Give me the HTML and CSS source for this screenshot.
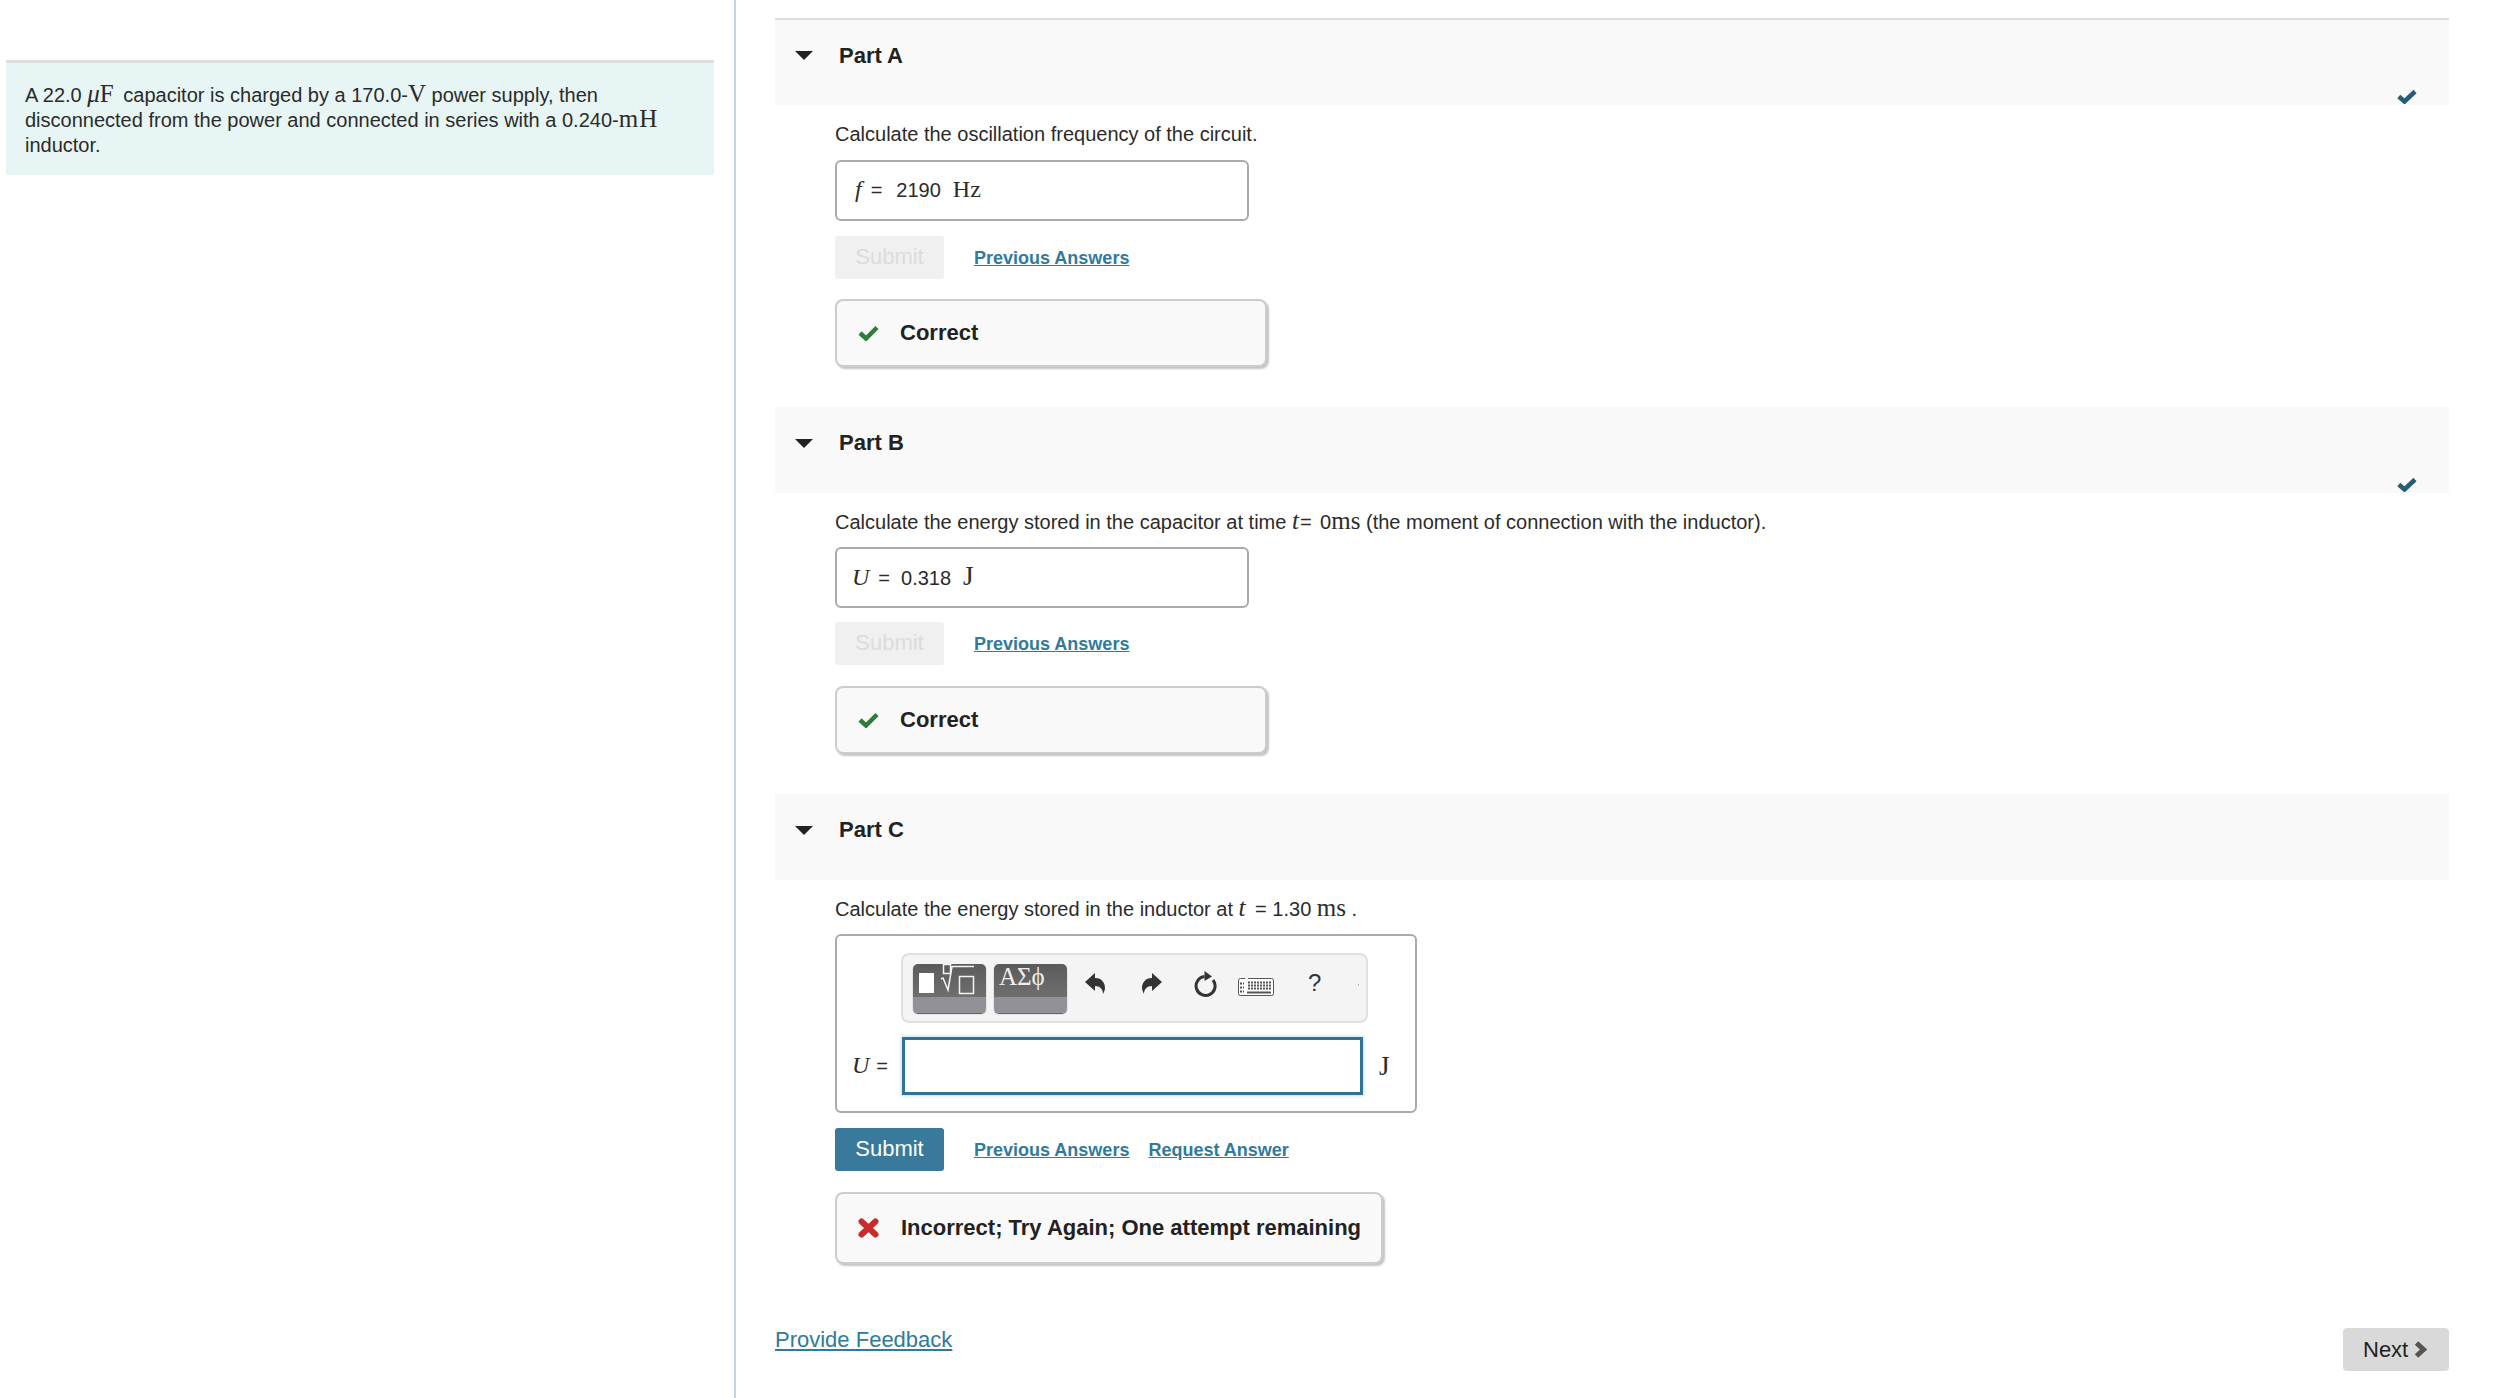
FILE: index.html
```html
<!DOCTYPE html>
<html lang="en">
<head>
<meta charset="utf-8">
<title>Part C</title>
<link rel="stylesheet" href="styles.css">
</head>
<body>
<aside class="aside">
  <div class="intro">
    <span class="line">A 22.0 <span class="mi mu">μ</span><span class="mr mu-f">F</span> capacitor is charged by a 170.0-<span class="mr">V</span> power supply, then</span>
    <span class="line">disconnected from the power and connected in series with a 0.240-<span class="mr mh">mH</span></span>
    <span class="line">inductor.</span>
  </div>
</aside>
<main class="main">
  <section class="part part-first">
    <header class="part-head">
      <span class="caret"></span><h2 class="part-title">Part A</h2>
      <svg class="done" viewBox="0 0 20 15"><polyline points="1.8,7.5 7.5,12.5 18,2.5" /></svg>
    </header>
    <div class="part-body">
      <p class="prompt">Calculate the oscillation frequency of the circuit.</p>
      <div class="answer answer-a"><span class="mi var">f</span><span class="eq">=</span><span class="val">2190</span><span class="mr unit">Hz</span></div>
      <div class="actions actions-a"><span class="btn btn-off">Submit</span><a class="action-link" href="#">Previous Answers</a></div>
      <div class="feedback feedback-ok">
        <svg class="fb-check" viewBox="0 0 21 16"><polyline points="2,8 8,13.5 19,2.5" /></svg>
        <span>Correct</span>
      </div>
    </div>
  </section>
  <section class="part">
    <header class="part-head">
      <span class="caret"></span><h2 class="part-title">Part B</h2>
      <svg class="done" viewBox="0 0 20 15"><polyline points="1.8,7.5 7.5,12.5 18,2.5" /></svg>
    </header>
    <div class="part-body">
      <p class="prompt">Calculate the energy stored in the capacitor at time <span class="mi">t</span><span class="eq-tight">=</span> 0<span class="mr">ms</span> (the moment of connection with the inductor).</p>
      <div class="answer answer-b"><span class="mi var">U</span><span class="eq">=</span><span class="val">0.318</span><span class="mr unit unit-j">J</span></div>
      <div class="actions"><span class="btn btn-off">Submit</span><a class="action-link" href="#">Previous Answers</a></div>
      <div class="feedback feedback-ok">
        <svg class="fb-check" viewBox="0 0 21 16"><polyline points="2,8 8,13.5 19,2.5" /></svg>
        <span>Correct</span>
      </div>
    </div>
  </section>
  <section class="part">
    <header class="part-head">
      <span class="caret"></span><h2 class="part-title">Part C</h2>
    </header>
    <div class="part-body">
      <p class="prompt">Calculate the energy stored in the inductor at <span class="mi t-wide">t</span> = 1.30 <span class="mr">ms</span> .</p>
      <div class="editor">
        <div class="toolbar">
          <span class="tbtn">
            <svg class="tbtn-svg" viewBox="0 0 73 49">
              <rect class="t-solid" x="6" y="9" width="15" height="20"/>
              <rect class="t-line" x="30.5" y="0.5" width="7" height="9"/>
              <polyline class="t-line" points="28,15 30,14 35,26 39,2.5 61,2.5"/>
              <rect class="t-line" x="46.5" y="12.5" width="14" height="17"/>
            </svg>
          </span>
          <span class="tbtn tbtn-text">ΑΣϕ</span>
          <svg class="tool tool-undo" viewBox="0 0 20 49"><path class="t-dark" d="M0 18 L10 9 V14 C17 14 20 19 20 24 C20 26 19 28 18 30 C18 25 15 22 10 22 V27 Z"/></svg>
          <svg class="tool tool-redo" viewBox="0 0 20 49"><path class="t-dark" d="M20 18 L10 9 V14 C3 14 0 19 0 24 C0 26 1 28 2 30 C2 25 5 22 10 22 V27 Z"/></svg>
          <svg class="tool tool-reload" viewBox="0 0 23 49"><path class="t-arc" d="M10.5 12.5 A9.5 9.5 0 1 0 19 16"/><path class="t-dark" d="M10.5 7 L18 12.5 L10.5 17 Z"/></svg>
          <svg class="tool tool-kbd" viewBox="0 0 36 49">
            <rect class="t-kbd" x="0.5" y="14.5" width="35" height="17" rx="2"/>
            <rect class="t-gap" x="7" y="13" width="3" height="6"/>
            <path class="t-dots" d="M10 18.5H33M10 21.5H33M10 24.5H33"/>
            <path class="t-dots" d="M2 19.5H6M2 23.5H6M2 27.5H6"/>
            <path class="t-bar" d="M9 28.5H33"/>
          </svg>
          <span class="tool-help">?</span>
          <span class="tool-dot"></span>
        </div>
        <div class="editor-row">
          <span class="editor-label"><span class="mi var">U</span><span class="eq">=</span></span>
          <div class="editor-input"></div>
          <span class="mr editor-unit">J</span>
        </div>
      </div>
      <div class="actions actions-a"><a class="btn btn-on" href="#">Submit</a><a class="action-link" href="#">Previous Answers</a><a class="action-link link-next" href="#">Request Answer</a></div>
      <div class="feedback feedback-bad">
        <svg class="fb-x" viewBox="0 0 21 20"><path d="M3.5 3.5 L17.5 16.5 M17.5 3.5 L3.5 16.5"/></svg>
        <span>Incorrect; Try Again; One attempt remaining</span>
      </div>
    </div>
  </section>
  <footer class="foot">
    <a class="foot-link" href="#">Provide Feedback</a>
    <a class="next" href="#">Next<svg class="next-icon" viewBox="0 0 13 19"><polyline points="2.5,3 9.5,9.5 2.5,16"/></svg></a>
  </footer>
</main>
</body>
</html>
```
FILE: styles.css
```css
* { box-sizing: border-box; }
html, body { margin: 0; height: 100%; }
body {
  display: flex;
  height: 1398px;
  overflow: hidden;
  background: #fff;
  color: #2b2b2b;
  font-family: "Liberation Sans", Arial, sans-serif;
  font-size: 20px;
}
a { color: #2f7a9f; }
.aside {
  width: 736px;
  flex: none;
  padding: 60px 20px 0 6px;
  border-right: 2px solid #c8d2e2;
}
.intro {
  height: 115px;
  padding: 20px 19px 0;
  background: #e7f5f5;
  border-top: 3px solid #dedddf;
}
.line { display: block; height: 25px; line-height: 25px; white-space: nowrap; }
.mi, .mr { font-family: "Liberation Serif", serif; font-size: 25px; line-height: 20px; }
.mi { font-style: italic; }
.mu-f { margin-right: 3px; letter-spacing: 1px; }
.mh { letter-spacing: 1px; }
.t-wide { margin-right: 4px; }
.main { flex: 1; padding: 18px 69px 0 39px; }
.part { margin-top: 40px; }
.part-first { margin-top: 0; }
.part-first .part-head { height: 87px; border-top: 2px solid #dddddd; }
.part-first .part-head .caret { margin-top: 31px; }
.part-first .part-head .part-title { margin-top: 24px; }
.part-head {
  position: relative;
  display: flex;
  align-items: flex-start;
  height: 86px;
  background: #f9f9f9;
}
.caret {
  width: 0;
  height: 0;
  margin: 32px 26px 0 20px;
  border-left: 9px solid transparent;
  border-right: 9px solid transparent;
  border-top: 9px solid #222;
}
.part-title {
  margin: 24px 0 0;
  font-size: 22px;
  line-height: 24px;
  font-weight: 700;
  color: #222;
}
.done {
  position: absolute;
  right: 32px;
  bottom: 1px;
  width: 20px;
  height: 15px;
  fill: none;
  stroke: #255d75;
  stroke-width: 4.5;
}
.part-body { padding-left: 60px; }
.prompt { margin: 17px 0 0; line-height: 24px; }
.answer {
  display: flex;
  align-items: baseline;
  width: 414px;
  height: 61px;
  margin-top: 13px;
  padding: 17px 0 0 18px;
  border: 2px solid #aaaaaa;
  border-radius: 6px;
}
.answer-a { margin-top: 14px; }
.answer-a .val { margin-left: 14px; }
.answer-b { padding-left: 15px; }
.var { font-size: 24px; }
.eq { margin-left: 9px; font-size: 20px; }
.eq-tight { margin: 0 3px 0 1px; }
.val { margin-left: 11px; }
.unit { margin-left: 12px; font-size: 24px; }
.unit-j { font-size: 27px; }
.actions {
  display: flex;
  align-items: center;
  margin-top: 14px;
}
.actions-a { margin-top: 15px; }
.btn {
  width: 109px;
  height: 43px;
  border-radius: 3px;
  line-height: 41px;
  text-align: center;
  font-size: 22px;
  text-decoration: none;
}
.btn-off { background: #f0f0f0; color: #dcdcdc; }
.btn-on { background: #38799c; color: #fff; }
.action-link {
  margin-left: 30px;
  padding-top: 2px;
  font-size: 18px;
  font-weight: 700;
}
.link-next { margin-left: 19px; }
.feedback {
  display: flex;
  align-items: center;
  height: 68px;
  margin-top: 21px;
  padding-left: 21px;
  background: #f9f9f9;
  border: 2px solid #cccccc;
  border-radius: 8px;
  box-shadow: 2px 2px 2px #c4c4c4;
  font-size: 22px;
  font-weight: 700;
  color: #222;
}
.actions-a + .feedback { margin-top: 20px; }
.actions-a + .feedback-bad { margin-top: 21px; }
.feedback-ok { width: 432px; }
.feedback-bad { width: 548px; height: 72px; }
.fb-check {
  width: 21px;
  height: 16px;
  margin-right: 21px;
  fill: none;
  stroke: #2e7d3a;
  stroke-width: 4.5;
}
.fb-x {
  width: 21px;
  height: 20px;
  margin-right: 22px;
  fill: none;
  stroke: #c92a2a;
  stroke-width: 6;
  stroke-linecap: round;
}
.editor {
  width: 582px;
  height: 179px;
  margin-top: 13px;
  padding-top: 17px;
  border: 2px solid #aaaaaa;
  border-radius: 6px;
}
.toolbar {
  display: flex;
  align-items: flex-start;
  width: 467px;
  height: 70px;
  margin-left: 64px;
  padding: 9px 0 0 10px;
  background: #f4f4f4;
  border: 2px solid #e0e0e0;
  border-radius: 8px;
}
.tbtn {
  width: 73px;
  height: 49px;
  margin-right: 8px;
  border-radius: 5px;
  background: linear-gradient(#5b5b5b 0, #6f6f6f 33px, #929198 33px, #929198 100%);
  box-shadow: 0 1px 1px #555555;
}
.tbtn-svg { display: block; width: 73px; height: 49px; }
.t-solid { fill: #fff; }
.t-line { fill: none; stroke: #f4f4f4; stroke-width: 1.5; }
.tbtn-text {
  padding-left: 5px;
  font-family: "Liberation Serif", serif;
  font-size: 25px;
  line-height: 26px;
  color: #eeeeee;
}
.tool { height: 49px; flex: none; }
.tool-undo { width: 20px; margin-left: 10px; }
.tool-redo { width: 20px; margin-left: 37px; }
.tool-reload { width: 23px; margin-left: 32px; }
.tool-kbd { width: 36px; margin-left: 21px; }
.t-dark { fill: #333333; }
.t-arc { fill: none; stroke: #333333; stroke-width: 3; }
.t-kbd { fill: #fff; stroke: #555555; stroke-width: 1; }
.t-gap { fill: #f4f4f4; }
.t-dots { fill: none; stroke: #555555; stroke-width: 2; stroke-dasharray: 2 1; }
.t-bar { fill: none; stroke: #555555; stroke-width: 2; }
.tool-help {
  margin: 5px 0 0 34px;
  font-size: 24px;
  line-height: 28px;
  color: #333333;
}
.tool-dot {
  width: 1px;
  height: 2px;
  margin: 20px 0 0 37px;
  background: #bbbbbb;
}
.editor-row {
  display: flex;
  align-items: center;
  margin-top: 14px;
}
.editor-label { width: 65px; padding-left: 15px; white-space: nowrap; }
.editor-label .eq { margin-left: 7px; }
.editor-input {
  width: 461px;
  height: 58px;
  background: #fff;
  border: 3px solid #2f7396;
  box-shadow: 0 0 4px #a9cbdc;
}
.editor-unit { margin-left: 16px; font-size: 27px; }
.foot {
  display: flex;
  justify-content: space-between;
  align-items: flex-start;
  margin-top: 64px;
}
.foot-link { font-size: 22px; line-height: 24px; }
.next {
  display: flex;
  align-items: center;
  width: 106px;
  height: 43px;
  padding-left: 20px;
  background: #d9d9d9;
  border-radius: 4px;
  color: #222;
  font-size: 22px;
  text-decoration: none;
}
.next-icon {
  width: 13px;
  height: 19px;
  margin-left: 6px;
  fill: none;
  stroke: #555555;
  stroke-width: 5;
}
```
